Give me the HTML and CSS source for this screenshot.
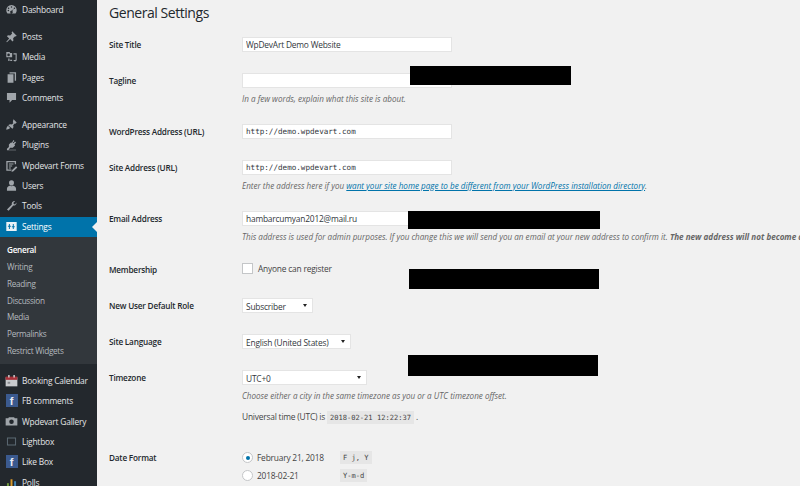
FILE: index.html
```html
<!DOCTYPE html>
<html lang="en">
<head>
<meta charset="utf-8">
<title>General Settings</title>
<link rel="stylesheet" href="styles.css">
</head>
<body>
<div class="app">
<nav class="side">
  <ul class="menu top">
    <li class="item"><svg class="ic" viewBox="0 0 20 20"><path d="M10 3a8 8 0 0 0-8 8c0 2 .7 3.700 1.800 5h12.400A8 8 0 0 0 18 11a8 8 0 0 0-8-8zm0 2a1.200 1.200 0 1 1 0 2.400A1.200 1.200 0 0 1 10 5zM5.500 7a1.200 1.200 0 1 1 0 2.400 1.200 1.200 0 0 1 0-2.400zm9 0a1.200 1.200 0 1 1 0 2.400 1.200 1.200 0 0 1 0-2.400zM4 11.500a1.200 1.200 0 1 1 2.400 0 1.200 1.200 0 0 1-2.400 0zm9.500-2.300-2.400 3.100a2 2 0 1 1-1.400-.3z"/></svg><span>Dashboard</span></li>
  </ul>
  <ul class="menu group">
    <li class="item"><svg class="ic" viewBox="0 0 20 20"><path d="M11 2l7 7-1.500 1-1-.5-3 3 .5 3.500-1.500 1.500-3.500-3.500L3 19l-1 -1 4.500-5L3 9.500 4.500 8 8 8.500l3-3-.8-1.300z"/></svg><span>Posts</span></li>
    <li class="item"><svg class="ic" viewBox="0 0 20 20"><path d="M2 3h5l1 1.500h3V11H2zm3.500 2.500a2 2 0 1 0 0 4 2 2 0 0 0 0-4zM13 5h5v10c0 1.500-1.200 2.500-2.500 2.500S13 16.500 13 15.500h2.500c.5 0 .8-.3.800-.8V7H13zM5 13h2v4H5zm3 2h3v2H8z"/></svg><span>Media</span></li>
    <li class="item"><svg class="ic" viewBox="0 0 20 20"><path d="M7 2h10v13h-2V4H7zM4 5h9v13H4z"/></svg><span>Pages</span></li>
    <li class="item"><svg class="ic" viewBox="0 0 20 20"><path d="M3 3h14v11h-6l-4 4v-4H3z"/></svg><span>Comments</span></li>
  </ul>
  <ul class="menu group">
    <li class="item"><svg class="ic" viewBox="0 0 20 20"><path d="M13 2l5 5-2 2-1-.5-2.500 2.500c.8 2 .5 4-1 5.500L5 11c1.500-1.500 3.500-1.800 5.500-1L13 7.500 12 6.500zM4.500 12l3.500 3.500C6 17.500 3.500 18 2 18c0-1.500.5-4 2.500-6z"/></svg><span>Appearance</span></li>
    <li class="item"><svg class="ic" viewBox="0 0 20 20"><path d="M13 3l1.500 1.500L12 7l1 1 2.500-2.500L17 7l-2.500 2.500 1 2L12 15H8l-2.500 3H3v-1.500L6 14v-4l3.500-3.500 1 1zM3 18h14v1H3z"/></svg><span>Plugins</span></li>
    <li class="item"><svg class="ic" viewBox="0 0 20 20"><path d="M2 3h15v5h-2V5H4v11h6v2H2zm4 4h7v1.500H6zm0 3h5v1.500H6zm0 3h3v1.500H6zm11-2l2 2-6 6-3 1 1-3z"/></svg><span>Wpdevart Forms</span></li>
    <li class="item"><svg class="ic" viewBox="0 0 20 20"><path d="M10 2a3.800 3.800 0 0 1 3.800 4c0 2-1.300 4-3.800 4S6.200 8 6.200 6A3.800 3.800 0 0 1 10 2zM3 18v-3c0-2.500 2.500-4 4.500-4.500 1.500 1 3.500 1 5 0 2 .5 4.500 2 4.500 4.500v3z"/></svg><span>Users</span></li>
    <li class="item"><svg class="ic" viewBox="0 0 20 20"><path d="M17.500 5.500c.5 2-.5 4-2.500 4.500-.8.2-1.500.1-2.200-.1L5.500 18 3 16l7.600-7.500c-.4-1.300-.2-2.800.8-4 1-1.100 2.600-1.500 4-1.200L13 5.800l.5 2 2 .5z"/></svg><span>Tools</span></li>
    <li class="item current"><svg class="ic" viewBox="0 0 20 20"><path d="M2 3h16v14H2zm4 3v3H4.500v1.500H6V14h1.500v-3.500H9V9H7.500V6zm6 0v3.500h-1.500V11H12v3h1.500v-3H15V9.500h-1.500V6z"/></svg><span>Settings</span></li>
  </ul>
  <ul class="sub">
    <li class="on">General</li>
    <li>Writing</li>
    <li>Reading</li>
    <li>Discussion</li>
    <li>Media</li>
    <li>Permalinks</li>
    <li>Restrict Widgets</li>
  </ul>
  <ul class="menu group after">
    <li class="item"><svg class="ic full" viewBox="0 0 20 20"><path fill="#c9cbce" d="M1 5h18v14H1z"/><path fill="#a8323a" d="M1 4h18v5H1z"/><path fill="#e6e6e6" d="M5 1.500h2v4H5zm8 0h2v4h-2z"/><path fill="#8a8d91" d="M4 12h4v3H4z"/></svg><span>Booking Calendar</span></li>
    <li class="item"><span class="fb">f</span><span>FB comments</span></li>
    <li class="item"><svg class="ic" viewBox="0 0 20 20"><path d="M1 5h4l1-1.500h8L15 5h4v11H1zm9 2a3.500 3.500 0 1 0 0 7 3.500 3.500 0 0 0 0-7z"/></svg><span>Wpdevart Gallery</span></li>
    <li class="item"><svg class="ic dim" viewBox="0 0 20 20"><path d="M3 4h14v12H3zm1.500 1.500v9h11v-9z"/></svg><span>Lightbox</span></li>
    <li class="item"><span class="fb">f</span><span>Like Box</span></li>
    <li class="item"><svg class="ic full" viewBox="0 0 20 20"><path fill="#6f9a3c" d="M3 11h3v7H3z"/><path fill="#d99a2b" d="M8.500 5h3v13h-3z"/><path fill="#3f83b5" d="M14 8h3v10h-3z"/></svg><span>Polls</span></li>
  </ul>
</nav>
<main class="main">
  <h1 class="title">General Settings</h1>
  <form class="form">
    <div class="row"><label class="lab">Site Title</label><div class="field"><input class="text" value="WpDevArt Demo Website"></div></div>
    <div class="row"><label class="lab">Tagline</label><div class="field"><input class="text" value=""><p class="desc">In a few words, explain what this site is about.</p></div></div>
    <div class="row"><label class="lab">WordPress Address (URL)</label><div class="field"><input class="text code" value="http://demo.wpdevart.com"></div></div>
    <div class="row"><label class="lab">Site Address (URL)</label><div class="field"><input class="text code" value="http://demo.wpdevart.com"><p class="desc">Enter the address here if you <a class="link" href="#">want your site home page to be different from your WordPress installation directory</a>.</p></div></div>
    <div class="row"><label class="lab">Email Address</label><div class="field"><input class="text" value="hambarcumyan2012@mail.ru"><p class="desc">This address is used for admin purposes. If you change this we will send you an email at your new address to confirm it. <b>The new address will not become active until confirmed.</b></p></div></div>
    <div class="row"><label class="lab">Membership</label><div class="field check"><span class="box"></span>Anyone can register</div></div>
    <div class="row"><label class="lab">New User Default Role</label><div class="field"><span class="sel role">Subscriber</span></div></div>
    <div class="row"><label class="lab">Site Language</label><div class="field"><span class="sel lang">English (United States)</span></div></div>
    <div class="row tz"><label class="lab">Timezone</label><div class="field"><span class="sel zone">UTC+0</span><p class="desc">Choose either a city in the same timezone as you or a UTC timezone offset.</p><p class="time">Universal time (UTC) is <code class="kbd">2018-02-21 12:22:37</code> .</p></div></div>
    <div class="row"><label class="lab date">Date Format</label><div class="field">
      <div class="radio"><span class="dot on"></span><span class="rtext">February 21, 2018</span><code class="kbd">F j, Y</code></div>
      <div class="radio"><span class="dot"></span><span class="rtext">2018-02-21</span><code class="kbd">Y-m-d</code></div>
    </div></div>
  </form>
  <div class="mask m1"></div>
  <div class="mask m2"></div>
  <div class="mask m3"></div>
  <div class="mask m4"></div>
</main>
</div>
</body>
</html>
```
FILE: styles.css
```css
* { box-sizing: border-box; }
html, body { margin: 0; height: 486px; overflow: hidden; background: #f1f1f1; }
body { font-family: "Open Sans", "Noto Sans", sans-serif; font-size: 8.4px; letter-spacing: -.2px; color: #444; }
ul { list-style: none; margin: 0; padding: 0; }
p { margin: 0; }

.app { display: flex; height: 486px; overflow: hidden; }

.side { width: 97px; flex: none; background: #23282d; color: #e4e6e8; height: 486px; overflow: hidden; }
.menu.group { margin-top: 6.500px; }
.item { position: relative; display: flex; align-items: center; height: 20.400px; padding: 0 0 1.500px 5px; gap: 4px; white-space: nowrap; }
.ic { width: 13px; height: 13px; flex: none; fill: #a0a5aa; }
.ic.dim { fill: #5d6a75; }
.current { background: #0073aa; color: #fff; }
.current .ic { fill: #eaf2f7; }
.current::after { content: ""; position: absolute; right: 0; top: 5px; border: 5.500px solid transparent; border-right-color: #f1f1f1; border-left-width: 0; }

.sub { background: #32373c; padding: 5px 0 4.500px; color: #b4b9be; font-size: 8.200px; letter-spacing: -.3px; }
.sub li { height: 16.800px; line-height: 16.800px; padding-left: 7px; white-space: nowrap; }
.sub li.on { color: #fff; font-weight: 600; }

.fb { width: 12px; height: 13px; flex: none; margin: 0 .5px; background: #3b5a8f; color: #e8edf5; font: 700 11px/15px "Liberation Sans", sans-serif; text-align: center; }

.main { position: relative; flex: 1; min-width: 0; padding-left: 12px; }
.title { margin: 0; font-size: 14px; font-weight: 400; letter-spacing: -.45px; color: #23282d; line-height: 20px; padding-top: 3px; height: 37px; }

.row { display: flex; margin-bottom: 21px; }
.row.tz { margin-bottom: 27px; }
.lab { width: 133px; flex: none; line-height: 15px; font-weight: 600; color: #23282d; font-size: 8.200px; letter-spacing: -.2px; }
.lab.date { line-height: 13px; }
.field { min-width: 0; white-space: nowrap; }

.text { display: block; width: 210px; height: 15px; padding: 0 3px; margin: 0; border: 1px solid #e4e4e4; background: #fff; font-family: inherit; font-size: 8.400px; letter-spacing: -.2px; color: #32373c; outline: 0; }
.text.code { font-family: "DejaVu Sans Mono", monospace; font-size: 7.600px; letter-spacing: 0; }

.desc { height: 15px; padding-top: 4.500px; line-height: 11px; font-style: italic; color: #666; font-size: 8.100px; letter-spacing: 0; }
.link { color: #0073aa; text-decoration: underline; }

.check { display: flex; align-items: center; height: 13px; gap: 5px; }
.box { width: 11px; height: 11px; border: 1px solid #c4c6c8; background: #fff; }

.sel { position: relative; display: block; height: 15px; line-height: 15px; padding-left: 3px; border: 1px solid #e4e4e4; background: #fff; color: #32373c; }
.sel::after { content: ""; position: absolute; right: 5px; top: 5px; border: 2px solid transparent; border-top: 3px solid #222; border-bottom-width: 0; }
.role { width: 71px; }
.lang { width: 109px; }
.zone { width: 125px; }

.time { margin-top: 9px; height: 15px; line-height: 15px; }
.kbd { font-family: "DejaVu Sans Mono", monospace; font-size: 7.100px; letter-spacing: 0; background: #e6e6e6; padding: 2px 3px; color: #444; }

.radio { display: flex; align-items: center; height: 13px; margin-bottom: 5px; }
.dot { position: relative; width: 11px; height: 11px; border-radius: 50%; border: 1px solid #c4c6c8; background: #fff; flex: none; margin-right: 4px; }
.dot.on::after { content: ""; position: absolute; left: 2.500px; top: 2.500px; width: 4px; height: 4px; border-radius: 50%; background: #0073aa; }
.rtext { width: 83px; }

.mask { position: absolute; background: #000; }
.m1 { left: 313px; top: 66px; width: 161px; height: 19px; }
.m2 { left: 311px; top: 211px; width: 192px; height: 18px; }
.m3 { left: 312px; top: 269px; width: 190px; height: 20px; }
.m4 { left: 311px; top: 355px; width: 190px; height: 21px; }
```
